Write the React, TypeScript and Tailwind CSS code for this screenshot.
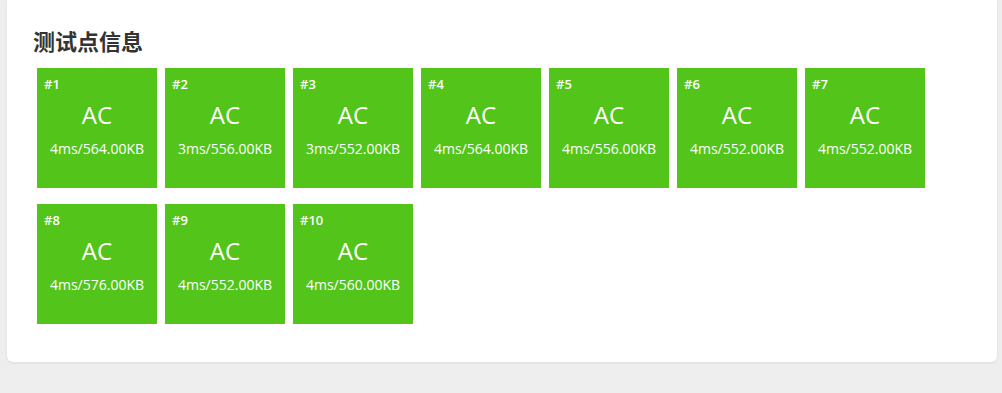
import React from "react";

const cases = [
  { id: 1, t: "4ms/564.00KB" },
  { id: 2, t: "3ms/556.00KB" },
  { id: 3, t: "3ms/552.00KB" },
  { id: 4, t: "4ms/564.00KB" },
  { id: 5, t: "4ms/556.00KB" },
  { id: 6, t: "4ms/552.00KB" },
  { id: 7, t: "4ms/552.00KB" },
  { id: 8, t: "4ms/576.00KB" },
  { id: 9, t: "4ms/552.00KB" },
  { id: 10, t: "4ms/560.00KB" },
];

export default function App() {
  return (
    <div
      className="w-[1002px] h-[393px] bg-[#eeeeee] overflow-hidden"
      style={{ fontFamily: '"Open Sans", "Noto Sans CJK SC", sans-serif' }}
    >
      <div className="ml-[7px] w-[990px] h-[362px] bg-white rounded-b-[6px] shadow-[0_1px_3px_rgba(0,0,0,0.08)] pl-[26px] pt-[24px]">
        <h2 className="text-[22px] leading-[32px] font-bold text-[#333333]" style={{ fontFamily: '"Noto Sans CJK SC", sans-serif' }}>
          测试点信息
        </h2>
        <div className="flex flex-wrap gap-x-2 gap-y-4 pl-[4px] pt-[12px] w-[900px]">
          {cases.map((c) => (
            <div key={c.id} className="w-[120px] h-[120px] bg-[#52c41a] text-white flex flex-col">
              <div className="pl-[7px] pt-[8px] text-[13px] leading-[16px] font-semibold">#{c.id}</div>
              <div className="text-center text-[24px] leading-[32px] mt-[7px]">AC</div>
              <div className="text-center text-[14px] leading-[20px] mt-[8px]">{c.t}</div>
            </div>
          ))}
        </div>
      </div>
    </div>
  );
}
